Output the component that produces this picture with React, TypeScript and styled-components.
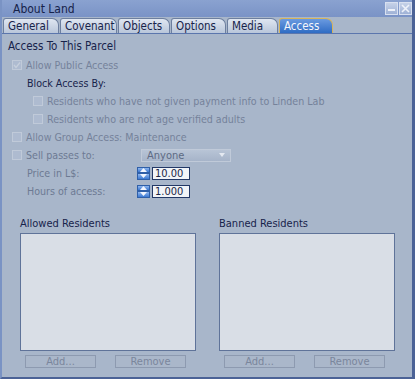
import React from "react";
import styled, { createGlobalStyle } from "styled-components";

const Global = createGlobalStyle`
  html, body { margin: 0; padding: 0; background: #a8b6ca; }
  body { font-family: "DejaVu Sans Condensed", "DejaVu Sans", sans-serif; font-stretch: condensed; }
`;

const Window = styled.div`
  width: 415px;
  height: 379px;
  box-sizing: border-box;
  background: #a8b6ca;
  border-left: 2px solid #7a93c4;
  border-right: 3px solid #4b6296;
  border-bottom: 2px solid #4b6296;
  display: flex;
  flex-direction: column;
  overflow: hidden;
`;

const TitleBar = styled.div`
  height: 17px;
  margin-left: -2px;
  margin-right: -3px;
  background: linear-gradient(#8aa2d0, #7a93c6);
  display: flex;
  align-items: center;
  padding: 0 3px 0 13px;
  color: #16224a;
  font-size: 12px;
`;

const Title = styled.span`
  flex: 1;
  padding-top: 1px;
`;

const WinButton = styled.div`
  width: 13px;
  height: 13px;
  margin-left: 1px;
  background: linear-gradient(#c6d2e8, #9fb2d6);
  border: 1px solid #d8e0f0;
  box-sizing: border-box;
  display: flex;
  align-items: center;
  justify-content: center;
`;

const TabBar = styled.div`
  height: 16px;
  display: flex;
  align-items: flex-end;
  padding-left: 3px;
  border-bottom: 1px solid #5b76ad;
  margin-left: -2px;
`;

const Tab = styled.div<{ $active?: boolean; $w: number }>`
  width: ${(p) => p.$w}px;
  height: 15px;
  box-sizing: border-box;
  margin-right: 1px;
  padding-left: 4px;
  font-size: 11.5px;
  line-height: 14px;
  border-radius: 3px 7px 0 0;
  color: ${(p) => (p.$active ? "#f4f6fb" : "#18244a")};
  background: ${(p) =>
    p.$active
      ? "linear-gradient(#6a9ae0, #2f6cc4)"
      : "linear-gradient(#dfe6f1, #b9c6da)"};
  border: 1px solid ${(p) => (p.$active ? "#d7b45a" : "#6d7f9f")};
  border-bottom: none;
`;

const Panel = styled.div`
  flex: 1;
  display: flex;
  flex-direction: column;
  padding: 4px 0 0 6px;
  font-size: 10.6px;
  color: #17234a;
`;

const Heading = styled.div`
  font-size: 11.5px;
  height: 16px;
  line-height: 16px;
  margin-bottom: 2px;
`;

const Row = styled.div<{ $indent: number; $h?: number }>`
  height: ${(p) => p.$h ?? 18}px;
  display: flex;
  align-items: center;
  padding-left: ${(p) => p.$indent}px;
`;

const Box = styled.div`
  width: 10px;
  height: 10px;
  box-sizing: border-box;
  border: 1px solid #c0cad9;
  background: #aebbd0;
  margin-right: 4px;
  display: flex;
  align-items: center;
  justify-content: center;
`;

const Dim = styled.span`
  color: #75829a;
`;

const Label = styled.span<{ $w?: number }>`
  color: #6d7a93;
  width: ${(p) => (p.$w ? `${p.$w}px` : "auto")};
`;

const Dark = styled.span`
  color: #17234a;
`;

const Combo = styled.div`
  width: 90px;
  height: 13px;
  box-sizing: border-box;
  border: 1px solid #c0cad9;
  background: linear-gradient(#b8c4d6, #a6b4c9);
  display: flex;
  align-items: center;
  padding: 0 5px;
  color: #5d6a84;
  font-size: 11px;
`;

const ComboText = styled.span`
  flex: 1;
`;

const Spinner = styled.div`
  width: 13px;
  height: 13px;
  display: flex;
  flex-direction: column;
  margin-right: 2px;
`;

const SpinHalf = styled.div`
  flex: 1;
  background: linear-gradient(#8fb6ee, #3b78d2);
  border: 1px solid #2f5fa8;
  display: flex;
  align-items: center;
  justify-content: center;
`;

const NumField = styled.div`
  width: 38px;
  height: 13px;
  box-sizing: border-box;
  border: 1px solid #223866;
  background: #f1f4f8;
  color: #1b2646;
  font-size: 11px;
  line-height: 11px;
  padding-left: 2px;
`;

const Lists = styled.div`
  display: flex;
  margin-top: 17px;
  padding-left: 12px;
  gap: 23px;
`;

const ListCol = styled.div`
  width: 176px;
  display: flex;
  flex-direction: column;
`;

const ListTitle = styled.div`
  height: 14px;
  line-height: 14px;
  font-size: 11px;
  margin-bottom: 2px;
`;

const ListBox = styled.div`
  height: 118px;
  box-sizing: border-box;
  border: 1px solid #5f7399;
  background: #d9dee6;
`;

const Buttons = styled.div`
  display: flex;
  padding-left: 5px;
  gap: 19px;
  margin-top: 4px;
`;

const Btn = styled.div`
  width: 71px;
  height: 13px;
  box-sizing: border-box;
  border: 1px solid #8d9ab0;
  background: #aab7ca;
  color: #7a869c;
  font-size: 11px;
  line-height: 11px;
  text-align: center;
`;

const Check = () => (
  <svg width="8" height="8" viewBox="0 0 8 8">
    <path d="M1 4 L3 6.5 L7 1.5" fill="none" stroke="#c6cfdc" strokeWidth="1.3" />
  </svg>
);

const Arrow = ({ up }: { up?: boolean }) => (
  <svg width="7" height="4" viewBox="0 0 7 4">
    <path d={up ? "M0 4 L3.5 0 L7 4Z" : "M0 0 L3.5 4 L7 0Z"} fill="#f2f6ff" />
  </svg>
);

const Spin = () => (
  <Spinner>
    <SpinHalf>
      <Arrow up />
    </SpinHalf>
    <SpinHalf>
      <Arrow />
    </SpinHalf>
  </Spinner>
);

const tabs: [string, number][] = [
  ["General", 56],
  ["Covenant", 57],
  ["Objects", 52],
  ["Options", 55],
  ["Media", 51],
  ["Access", 54],
];

export default function App() {
  return (
    <>
      <Global />
      <Window>
        <TitleBar>
          <Title>About Land</Title>
          <WinButton>
            <svg width="9" height="9" viewBox="0 0 9 9">
              <rect x="1" y="5" width="7" height="2" fill="#eef2fa" />
            </svg>
          </WinButton>
          <WinButton>
            <svg width="9" height="9" viewBox="0 0 9 9">
              <path d="M1 1 L8 8 M8 1 L1 8" stroke="#eef2fa" strokeWidth="1.6" />
            </svg>
          </WinButton>
        </TitleBar>
        <TabBar>
          {tabs.map(([t, w]) => (
            <Tab key={t} $w={w} $active={t === "Access"}>
              {t}
            </Tab>
          ))}
        </TabBar>
        <Panel>
          <Heading>Access To This Parcel</Heading>
          <Row $indent={4}>
            <Box>
              <Check />
            </Box>
            <Dim>Allow Public Access</Dim>
          </Row>
          <Row $indent={19}>
            <Dark>Block Access By:</Dark>
          </Row>
          <Row $indent={25}>
            <Box />
            <Dim>Residents who have not given payment info to Linden Lab</Dim>
          </Row>
          <Row $indent={25}>
            <Box />
            <Dim>Residents who are not age verified adults</Dim>
          </Row>
          <Row $indent={4}>
            <Box />
            <Dim>Allow Group Access: Maintenance</Dim>
          </Row>
          <Row $indent={4}>
            <Box />
            <Label $w={115}>Sell passes to:</Label>
            <Combo>
              <ComboText>Anyone</ComboText>
              <svg width="6" height="4" viewBox="0 0 6 4">
                <path d="M0 0 L3 4 L6 0Z" fill="#e4e9f1" />
              </svg>
            </Combo>
          </Row>
          <Row $indent={19}>
            <Label $w={110}>Price in L$:</Label>
            <Spin />
            <NumField>10.00</NumField>
          </Row>
          <Row $indent={19}>
            <Label $w={110}>Hours of access:</Label>
            <Spin />
            <NumField>1.000</NumField>
          </Row>
          <Lists>
            <ListCol>
              <ListTitle>Allowed Residents</ListTitle>
              <ListBox />
              <Buttons>
                <Btn>Add...</Btn>
                <Btn>Remove</Btn>
              </Buttons>
            </ListCol>
            <ListCol>
              <ListTitle>Banned Residents</ListTitle>
              <ListBox />
              <Buttons>
                <Btn>Add...</Btn>
                <Btn>Remove</Btn>
              </Buttons>
            </ListCol>
          </Lists>
        </Panel>
      </Window>
    </>
  );
}
